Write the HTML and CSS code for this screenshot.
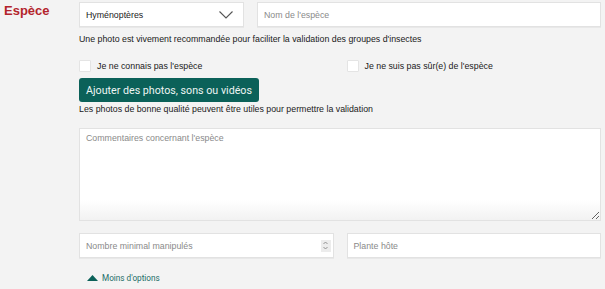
FILE: index.html
```html
<!DOCTYPE html>
<html lang="fr">
<head>
<meta charset="utf-8">
<link rel="stylesheet" href="styles.css">
</head>
<body>
<div class="row">
  <div class="label">Espèce</div>
  <div class="content">
    <div class="pair top">
      <div class="field select">
        <span>Hyménoptères</span>
        <svg class="chev" width="14" height="8" viewBox="0 0 14 8"><path d="M0.5 0.5 L7 7 L13.5 0.5" fill="none" stroke="#555" stroke-width="1.1"/></svg>
      </div>
      <div class="field name"><span class="ph">Nom de l'espèce</span></div>
    </div>
    <p class="hint first">Une photo est vivement recommandée pour faciliter la validation des groupes d'insectes</p>
    <div class="halves checks">
      <label class="check"><span class="box"></span>Je ne connais pas l'espèce</label>
      <label class="check"><span class="box"></span>Je ne suis pas sûr(e) de l'espèce</label>
    </div>
    <button class="btn">Ajouter des photos, sons ou vidéos</button>
    <p class="hint second">Les photos de bonne qualité peuvent être utiles pour permettre la validation</p>
    <textarea class="comments" placeholder="Commentaires concernant l'espèce"></textarea>
    <div class="halves bottom">
      <div class="field num"><span class="ph">Nombre minimal manipulés</span>
        <span class="spin"><svg width="9" height="11" viewBox="0 0 9 11"><path d="M2.5 4 L4.5 2 L6.5 4 M2.5 7 L4.5 9 L6.5 7" fill="none" stroke="#888" stroke-width="0.9"/></svg></span>
      </div>
      <div class="field"><span class="ph">Plante hôte</span></div>
    </div>
    <div class="less"><svg width="11" height="6" viewBox="0 0 11 6"><path d="M0 6 L5.5 0 L11 6 Z" fill="#0b6159"/></svg><span>Moins d'options</span></div>
  </div>
</div>
</body>
</html>
```
FILE: styles.css
```css
html, body { margin: 0; padding: 0; }
body {
  background: #f3f3f3;
  width: 605px;
  height: 289px;
  overflow: hidden;
  font-family: "Liberation Sans", Arial, sans-serif;
  font-size: 8.8px;
  color: #1a1a1a;
}
.row { display: flex; }
.label {
  width: 75px;
  padding-left: 4px;
  padding-top: 3px;
  font-family: "Liberation Sans", Arial, sans-serif;
  font-weight: 700;
  font-size: 13px;
  line-height: 16px;
  color: #b3242c;
}
.content { width: 522px; padding-top: 2px; }
.pair { display: flex; gap: 13px; }
.field {
  box-sizing: border-box;
  height: 25px;
  background: #fff;
  border: 1px solid #e2e2e2;
  box-shadow: 0 1px 0 #e8e8e8;
  display: flex;
  align-items: center;
  padding: 0 6px;
  position: relative;
}
.select { width: 165px; padding-left: 6px; justify-content: space-between; color: #1a1a1a; }
.select .chev { margin-right: 4px; }
.name { flex: 1; }
.ph { color: #8a8a8a; }
.hint { margin: 0; line-height: 12px; height: 12px; }
.hint.first { margin-top: 6px; }
.halves { display: grid; grid-template-columns: 1fr 1fr; column-gap: 13px; }
.checks { margin-top: 15px; height: 12px; }
.check { display: flex; align-items: center; gap: 6px; height: 12px; }
.box {
  box-sizing: border-box;
  width: 12px; height: 12px;
  background: #fff;
  border: 1px solid #e4e4e4;
  border-radius: 1px;
}
.btn {
  display: block;
  margin-top: 6px;
  width: 180px;
  height: 24px;
  border: 0;
  border-radius: 3px;
  background: #0b6159;
  color: #eef5f3;
  font-family: Roboto, "Liberation Sans", sans-serif;
  font-size: 10.7px;
  padding: 0;
  text-align: center;
}
.hint.second { margin-top: 1px; }
.comments {
  display: block;
  box-sizing: border-box;
  margin: 13px 0 0;
  width: 522px;
  height: 93px;
  border: 1px solid #e2e2e2;
  background: linear-gradient(to bottom, #fff 0, #fff 78%, #f2f2f2 100%);
  font-family: "Liberation Sans", Arial, sans-serif;
  font-size: 8.8px;
  padding: 4px 6px;
  resize: vertical;
}
.comments::placeholder { color: #8a8a8a; }
.bottom { margin-top: 12px; }
.num { justify-content: space-between; }
.spin {
  width: 10px; height: 12px;
  background: #ececec;
  display: flex; align-items: center; justify-content: center;
  margin-right: -4px;
}
.less {
  display: flex;
  align-items: center;
  gap: 4px;
  margin-top: 14px;
  height: 12px;
  padding-left: 8px;
  font-family: Roboto, "Liberation Sans", sans-serif;
  font-size: 8.2px;
  color: #1c6d67;
}
```
